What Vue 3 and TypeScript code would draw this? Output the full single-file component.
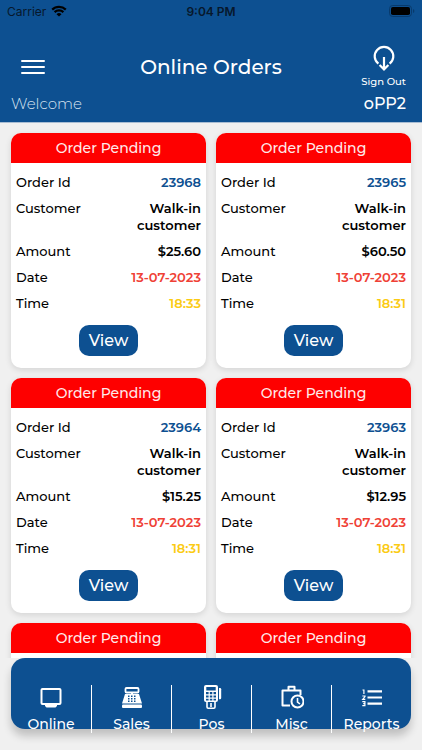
<script setup lang="ts">
interface Order {
  id: number
  customer: string
  amount: string
  date: string
  time: string
}

type IconName = 'monitor' | 'register' | 'terminal' | 'case' | 'list'

const orders: Order[] = [
  { id: 23968, customer: 'Walk-in customer', amount: '$25.60', date: '13-07-2023', time: '18:33' },
  { id: 23965, customer: 'Walk-in customer', amount: '$60.50', date: '13-07-2023', time: '18:31' },
  { id: 23964, customer: 'Walk-in customer', amount: '$15.25', date: '13-07-2023', time: '18:31' },
  { id: 23963, customer: 'Walk-in customer', amount: '$12.95', date: '13-07-2023', time: '18:31' },
]

const tabs: { label: string; icon: IconName }[] = [
  { label: 'Online', icon: 'monitor' },
  { label: 'Sales', icon: 'register' },
  { label: 'Pos', icon: 'terminal' },
  { label: 'Misc', icon: 'case' },
  { label: 'Reports', icon: 'list' },
]
</script>

<template>
  <div class="screen">
    <header class="top">
      <div class="status">
        <div class="carrier">
          <span>Carrier</span>
          <svg class="wifi" viewBox="0 0 16 12" aria-hidden="true">
            <path d="M1.2 4.6a9.7 9.7 0 0 1 13.6 0M3.6 7.1a6.3 6.3 0 0 1 8.8 0" fill="none" stroke="currentColor" stroke-width="2.2" />
            <path d="M8 11.6 5.5 9.2a3.6 3.6 0 0 1 5 0z" fill="currentColor" />
          </svg>
        </div>
        <span class="clock">9:04 PM</span>
        <svg class="battery" viewBox="0 0 26 12" aria-hidden="true">
          <rect x="0.5" y="0.5" width="22" height="11" rx="3.2" fill="none" stroke="#083a6c" />
          <rect x="2" y="2" width="19" height="8" rx="1.8" fill="#000" />
          <path d="M24 4v4q1.4-.6 1.4-2T24 4z" fill="#083a6c" />
        </svg>
      </div>
      <div class="bar">
        <button class="menu" type="button" aria-label="Menu">
          <svg viewBox="0 0 24 16" aria-hidden="true">
            <path d="M1 2h22M1 8h22M1 14h22" stroke="currentColor" stroke-width="2" stroke-linecap="round" />
          </svg>
        </button>
        <h1>Online Orders</h1>
        <button class="signout" type="button">
          <svg viewBox="0 0 24 26" aria-hidden="true">
            <path d="M6.4 18.6A9.3 9.3 0 1 1 17.6 18.6" fill="none" stroke="currentColor" stroke-width="2.2" />
            <path d="M12 12v12M7.6 20l4.4 4.4 4.4-4.4" fill="none" stroke="currentColor" stroke-width="2.2" />
          </svg>
          <span>Sign Out</span>
        </button>
      </div>
      <div class="greeting">
        <span class="welcome">Welcome</span>
        <span class="user">oPP2</span>
      </div>
    </header>

    <main class="orders">
      <article v-for="order in orders" :key="order.id" class="card">
        <h2>Order Pending</h2>
        <dl>
          <div><dt>Order Id</dt><dd class="blue">{{ order.id }}</dd></div>
          <div><dt>Customer</dt><dd class="customer">{{ order.customer }}</dd></div>
          <div><dt>Amount</dt><dd>{{ order.amount }}</dd></div>
          <div><dt>Date</dt><dd class="red">{{ order.date }}</dd></div>
          <div><dt>Time</dt><dd class="yellow">{{ order.time }}</dd></div>
        </dl>
        <button class="view" type="button">View</button>
      </article>
      <article v-for="n in 2" :key="n" class="card next">
        <h2>Order Pending</h2>
      </article>
    </main>

    <nav class="tabs">
      <a v-for="tab in tabs" :key="tab.label" href="#">
        <svg v-if="tab.icon === 'monitor'" viewBox="0 0 24 24" aria-hidden="true">
          <rect x="2.5" y="4" width="19" height="15" rx="1" fill="none" stroke="currentColor" stroke-width="2" />
          <path d="M6 19h12v2l-1.5 1.5h-9L6 21z" fill="currentColor" />
        </svg>
        <svg v-else-if="tab.icon === 'register'" viewBox="0 0 24 24" aria-hidden="true">
          <rect x="5.5" y="3" width="13" height="4.5" rx="1" fill="none" stroke="currentColor" stroke-width="1.8" />
          <path d="M11 7h2v3h-2z" fill="currentColor" />
          <path fill-rule="evenodd" fill="currentColor" d="M5 9h14l3 9.5H2zM8 10.5V12h1.5v-1.5zm3 0V12h1.5v-1.5zm3 0V12h1.5v-1.5zM8 13v1.5h1.5V13zm3 0v1.5h1.5V13zm3 0v1.5h1.5V13zM8 15.5V17h1.5v-1.5zm3 0V17h1.5v-1.5zm3 0V17h1.5v-1.5z" />
          <rect x="2" y="19.5" width="20" height="3.5" rx="1" fill="currentColor" />
        </svg>
        <svg v-else-if="tab.icon === 'terminal'" viewBox="0 0 24 24" aria-hidden="true">
          <path fill-rule="evenodd" fill="currentColor" d="M6 0h10q2 0 2 2v13q0 2-2 2H6q-2 0-2-2V2q0-2 2-2zM6.3 2v3.5h9.4V2zM6 7v2.2h2.6V7zm3.8 0v2.2h2.5V7zm3.7 0v2.2H16V7zM6 10.4v2.2h2.6v-2.2zm3.8 0v2.2h2.5v-2.2zm3.7 0v2.2H16v-2.2zM6 13.7v1.8h2.6v-1.8zm3.8 0v1.8h2.5v-1.8zm3.7 0v1.8H16v-1.8z" />
          <path d="M19 3h1q1.2 0 1.2 1.2V13q0 1.2-1.2 1.2h-1z" fill="currentColor" />
          <path d="M7 17v5q0 1.2 1.2 1.2h5.6q1.2 0 1.2-1.2v-5M11 18v4" fill="none" stroke="currentColor" stroke-width="1.6" />
        </svg>
        <svg v-else-if="tab.icon === 'case'" viewBox="0 0 24 24" aria-hidden="true">
          <path d="M10 20.5H2.5V5.5h18V10M8.5 5V1.8h6V5" fill="none" stroke="currentColor" stroke-width="2" stroke-linejoin="round" />
          <circle cx="17.5" cy="16.5" r="6" fill="none" stroke="currentColor" stroke-width="2" />
          <path d="M17.5 13v4l2.5 2" fill="none" stroke="currentColor" stroke-width="1.6" />
        </svg>
        <svg v-else viewBox="0 0 24 24" aria-hidden="true">
          <path d="M7.5 6.3H22M7.5 12.5H22M7.5 18.7H22" stroke="currentColor" stroke-width="2.2" />
          <path d="M2.5 5h1.4v4M2.3 11H5v.6l-2.3 2.8h2.6M2.3 16.7h2.6v4H2.3M3.2 18.7h1.7" fill="none" stroke="currentColor" stroke-width="1.2" />
        </svg>
        <span>{{ tab.label }}</span>
      </a>
    </nav>
  </div>
</template>

<style>
body {
  background: #f0f0f0;
}
</style>

<style scoped>
.screen {
  box-sizing: border-box;
  height: 100vh;
  display: flex;
  flex-direction: column;
  background: #f0f0f0;
  color: #000;
  font-family: Montserrat, Inter, "Liberation Sans", sans-serif;
  font-size: 13px;
}

h1,
h2,
dl,
dd {
  margin: 0;
}

button {
  border: 0;
  padding: 0;
  background: none;
  color: inherit;
  font-family: inherit;
  cursor: pointer;
}

svg {
  display: block;
}

.top {
  flex: none;
  background: #0d5091;
  border-bottom: 1px solid #a9bdd3;
  color: #fff;
}

.status {
  display: grid;
  grid-template-columns: 1fr auto 1fr;
  align-items: center;
  height: 22px;
  padding: 0 7px;
  color: #07182c;
  font-family: Inter, "Liberation Sans", sans-serif;
  font-size: 12px;
}

.carrier {
  display: flex;
  align-items: center;
  gap: 5px;
}

.wifi {
  width: 16px;
  height: 12px;
  color: #000;
}

.clock {
  font-weight: 600;
}

.battery {
  justify-self: end;
  width: 26px;
  height: 12px;
}

.bar {
  display: grid;
  grid-template-columns: 1fr auto 1fr;
  align-items: center;
  height: 70px;
  padding: 0 16px;
}

.menu {
  justify-self: start;
  margin-top: 20px;
  padding: 0 5px;
}

.menu svg {
  width: 24px;
  height: 16px;
}

h1 {
  margin-top: 20px;
  font-size: 20px;
  font-weight: 500;
  line-height: 26px;
}

.signout {
  justify-self: end;
  display: flex;
  flex-direction: column;
  align-items: center;
  gap: 4px;
  margin-top: 20px;
  font-size: 10px;
  font-weight: 500;
  line-height: 14px;
}

.signout svg {
  width: 24px;
  height: 26px;
}

.greeting {
  display: flex;
  justify-content: space-between;
  align-items: center;
  height: 22px;
  padding: 0 16px 8px 11px;
}

.welcome {
  font-size: 15px;
  font-weight: 300;
  color: #dbe6f1;
}

.user {
  font-size: 16px;
  font-weight: 500;
}

.orders {
  flex: 1;
  min-height: 0;
  overflow: hidden;
  display: grid;
  grid-template-columns: 1fr 1fr;
  align-content: start;
  gap: 10px;
  padding: 10px 11px 0;
}

.card {
  border-radius: 10px;
  background: #fff;
  box-shadow: 0 2px 6px rgba(0, 0, 0, 0.12);
  display: flex;
  flex-direction: column;
  align-items: stretch;
  padding-bottom: 12px;
}

.card.next {
  min-height: 223px;
}

h2 {
  border-radius: 10px 10px 0 0;
  background: #fe0000;
  color: #ffe9e9;
  font-size: 14px;
  font-weight: 500;
  line-height: 30px;
  text-align: center;
}

dl {
  display: flex;
  flex-direction: column;
  gap: 9px;
  padding: 11px 5px 13px;
  line-height: 17px;
}

dl div {
  display: flex;
  justify-content: space-between;
}

dt {
  font-weight: 500;
}

dd {
  font-weight: 600;
  text-align: right;
}

.customer {
  width: 80px;
}

.blue {
  color: #0d5091;
}

.red {
  color: #ef4136;
}

.yellow {
  color: #fbcb14;
}

.view {
  align-self: center;
  padding: 0 10px;
  border-radius: 10px;
  background: #0d5091;
  color: #fff;
  font-size: 16px;
  font-weight: 500;
  line-height: 31px;
}

.tabs {
  flex: none;
  display: grid;
  grid-template-columns: repeat(5, 1fr);
  height: 44px;
  margin: 0 11px 21px;
  padding-top: 27px;
  border-radius: 14px;
  background: #0d5091;
  box-shadow: 0 7px 8px rgba(0, 0, 0, 0.2);
}

.tabs a {
  display: flex;
  flex-direction: column;
  align-items: center;
  gap: 6px;
  height: 48px;
  color: #fff;
  font-size: 14px;
  font-weight: 500;
  line-height: 18px;
  text-decoration: none;
}

.tabs a + a {
  border-left: 1px solid #fff;
}

.tabs svg {
  width: 24px;
  height: 24px;
}
</style>
